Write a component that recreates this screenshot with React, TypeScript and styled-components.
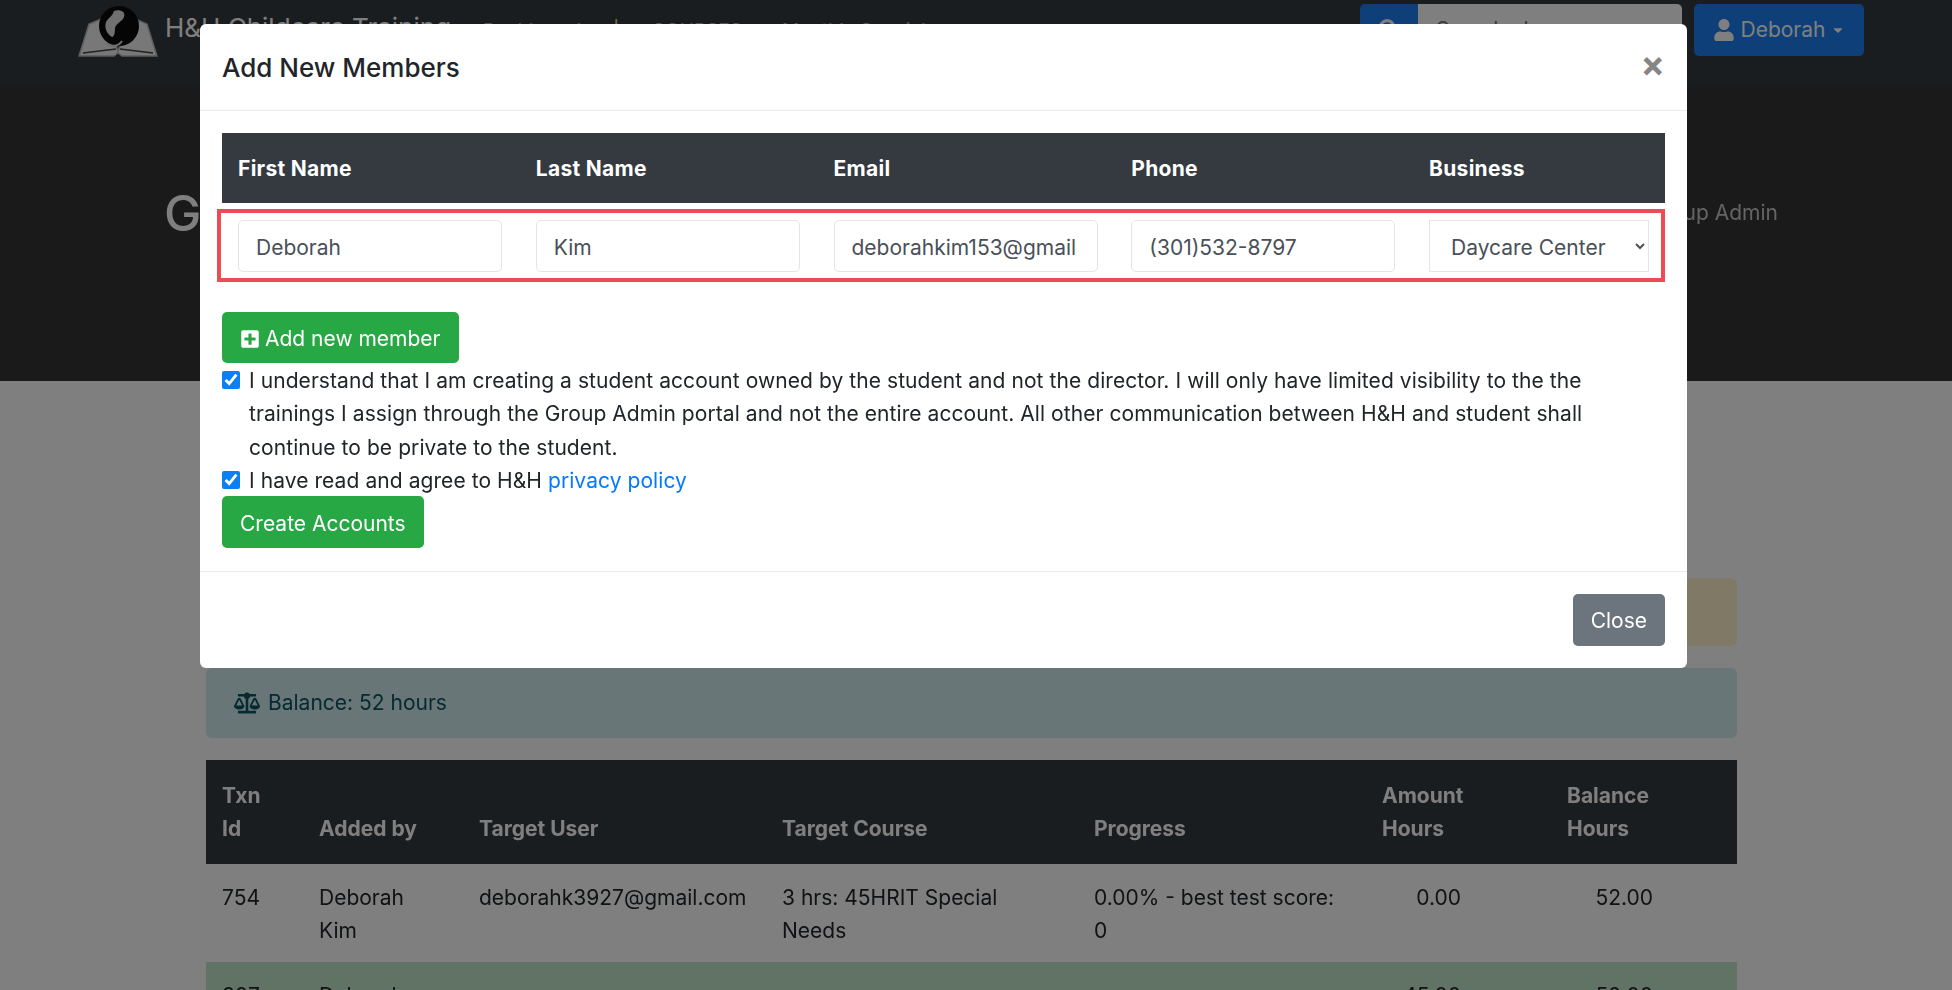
import styled, { createGlobalStyle } from "styled-components";
import {
  FaBalanceScale,
  FaCaretDown,
  FaPlusSquare,
  FaSearch,
  FaUser,
} from "react-icons/fa";

const GlobalStyle = createGlobalStyle`
  * {
    box-sizing: border-box;
  }
  html, body {
    margin: 0;
    height: 100%;
    overflow: hidden;
  }
  body {
    background: #fff;
    color: #212529;
    font-family: Inter, Roboto, "Liberation Sans", sans-serif;
    font-size: 21px;
    line-height: 33.3px;
  }
`;

const Logo = () => (
  <svg width="80" height="55" viewBox="0 0 80 55">
    <path
      d="M1 53 L11 21 L28 14 L40 48 L53 14 L69 21 L79 53 L44 53 L40 50 L36 53 Z"
      fill="#f0f0f0"
      stroke="#b8b8b8"
      strokeWidth="1.5"
    />
    <path d="M5 50 L38 46 M75 50 L42 46" stroke="#444" strokeWidth="1.5" />
    <circle cx="41" cy="23" r="20" fill="#0a0a0a" />
    <path
      d="M36 8 C42 6 48 9 46 14 C44 19 38 20 37 25 C37 30 36 34 34 34 C29 31 26 25 28 19 C30 15 34 14 36 8 Z"
      fill="#e0e0e0"
    />
    <path d="M44 38 C40 44 32 44 28 40" stroke="#e0e0e0" strokeWidth="2" fill="none" />
  </svg>
);

export default function App() {
  return (
    <Stage>
      <GlobalStyle />
      <Page>
        <Navbar>
          <Brand>
            <Logo />
            <BrandName>H&amp;H Childcare Training</BrandName>
          </Brand>
          <NavLinks>
            <NavLink>Dashboard</NavLink>
            <NavDivider>|</NavDivider>
            <NavLink>COURSES</NavLink>
            <NavLink>Monthly Special</NavLink>
          </NavLinks>
          <SearchGroup>
            <SearchButton>
              <FaSearch size={20} />
            </SearchButton>
            <SearchInput placeholder="Search classes" />
          </SearchGroup>
          <UserButton>
            <FaUser size={22} />
            Deborah
            <FaCaretDown size={14} />
          </UserButton>
        </Navbar>
        <Banner>
          <BannerTitle>Group Admin</BannerTitle>
          <Crumb>Group Admin</Crumb>
        </Banner>
        <Content>
          <Alert $tone="warning" />
          <Alert $tone="info">
            <FaBalanceScale size={26} />
            Balance: 52 hours
          </Alert>
          <Table>
            <colgroup>
              <col width="97" />
              <col width="160" />
              <col width="303" />
              <col width="312" />
              <col width="288" />
              <col width="185" />
              <col width="186" />
            </colgroup>
            <thead>
              <tr>
                <HeadCell>Txn<br />Id</HeadCell>
                <HeadCell>Added by</HeadCell>
                <HeadCell>Target User</HeadCell>
                <HeadCell>Target Course</HeadCell>
                <HeadCell>Progress</HeadCell>
                <HeadCell>Amount<br />Hours</HeadCell>
                <HeadCell>Balance<br />Hours</HeadCell>
              </tr>
            </thead>
            <tbody>
              <tr>
                <Cell>754</Cell>
                <Cell>Deborah<br />Kim</Cell>
                <Cell>deborahk3927@gmail.com</Cell>
                <Cell>3 hrs: 45HRIT Special<br />Needs</Cell>
                <Cell>0.00% - best test score:<br />0</Cell>
                <Cell $numberPad={90}>0.00</Cell>
                <Cell $numberPad={84}>52.00</Cell>
              </tr>
              <GreenRow>
                <Cell>387</Cell>
                <Cell>Deborah<br />Kim</Cell>
                <Cell />
                <Cell />
                <Cell />
                <Cell $numberPad={90}>45.00</Cell>
                <Cell $numberPad={84}>52.00</Cell>
              </GreenRow>
            </tbody>
          </Table>
        </Content>
      </Page>

      <Backdrop />

      <Modal>
        <ModalHeader>
          <ModalTitle>Add New Members</ModalTitle>
          <CloseX>×</CloseX>
        </ModalHeader>
        <ModalBody>
          <MemberHead>
            <span>First Name</span>
            <span>Last Name</span>
            <span>Email</span>
            <span>Phone</span>
            <span>Business</span>
          </MemberHead>
          <MemberRow>
            <TextInput readOnly value="Deborah" />
            <TextInput readOnly value="Kim" />
            <TextInput readOnly value="deborahkim153@gmail.com" />
            <TextInput readOnly value="(301)532-8797" />
            <BusinessSelect defaultValue="Daycare Center">
              <option>Daycare Center</option>
            </BusinessSelect>
          </MemberRow>
          <AddButton>
            <FaPlusSquare size={20} />
            Add new member
          </AddButton>
          <CheckRow>
            <Check type="checkbox" readOnly checked />
            <CheckText>
              I understand that I am creating a student account owned by the
              student and not the director. I will only have limited visibility
              to the the trainings I assign through the Group Admin portal and
              not the entire account. All other communication between H&amp;H
              and student shall continue to be private to the student.
            </CheckText>
          </CheckRow>
          <CheckRow>
            <Check type="checkbox" readOnly checked />
            <CheckText>
              I have read and agree to H&amp;H <Link>privacy policy</Link>
            </CheckText>
          </CheckRow>
          <Button $color="#28a745">Create Accounts</Button>
        </ModalBody>
        <ModalFooter>
          <Button $color="#6c757d">Close</Button>
        </ModalFooter>
      </Modal>
    </Stage>
  );
}

/* the reference is a soft, upscaled capture */
const Stage = styled.div`
  height: 990px;
  filter: blur(0.5px);
`;

const Page = styled.div`
  height: 990px;
  overflow: hidden;
`;

const Navbar = styled.nav`
  height: 85px;
  display: flex;
  align-items: flex-start;
  padding: 3px 88px 0 78px;
  background: #343a40;
`;

const Brand = styled.div`
  display: flex;
  align-items: flex-start;
  gap: 7px;
`;

const BrandName = styled.span`
  font-size: 26px;
  line-height: 50px;
  color: #fff;
`;

const NavLinks = styled.div`
  display: flex;
  align-items: center;
  gap: 40px;
  margin-left: 32px;
  padding-top: 11px;
  font-size: 19px;
  color: rgba(255, 255, 255, 0.6);
`;

const NavLink = styled.span``;

const NavDivider = styled.span`
  color: #ffe08a;
  margin: 0 -8px;
`;

const SearchGroup = styled.div`
  display: flex;
  margin-left: auto;
  margin-top: 1px;
  height: 52px;
`;

const SearchButton = styled.button`
  width: 58px;
  border: 0;
  border-radius: 5px 0 0 5px;
  background: #1c7ef0;
  color: #fff;
`;

const SearchInput = styled.input`
  width: 264px;
  border: 0;
  border-radius: 0 5px 5px 0;
  padding: 0 18px;
  background: #fff;
  font: inherit;
`;

const UserButton = styled.button`
  display: flex;
  align-items: center;
  justify-content: center;
  gap: 6px;
  width: 170px;
  height: 52px;
  margin: 1px 0 0 12px;
  border: 0;
  border-radius: 5px;
  background: #1c7ef0;
  color: #fff;
  font: inherit;
`;

const Banner = styled.header`
  height: 296px;
  display: flex;
  align-items: center;
  justify-content: space-between;
  padding: 0 174px 40px 164px;
  background: #343434;
  color: #fff;
`;

const BannerTitle = styled.h1`
  margin: 0;
  font-size: 50px;
  font-weight: 500;
  line-height: 60px;
`;

const Crumb = styled.span`
  color: #c8c8c8;
`;

const Content = styled.main`
  display: flex;
  flex-direction: column;
  gap: 22px;
  padding: 197px 215px 0 206px;
`;

const Alert = styled.div<{ $tone: "warning" | "info" }>`
  height: ${({ $tone }) => ($tone === "warning" ? "68px" : "70px")};
  display: flex;
  align-items: center;
  gap: 8px;
  padding: 0 28px;
  border-radius: 6px;
  background: ${({ $tone }) => ($tone === "warning" ? "#fff3cd" : "#d1ecf1")};
  color: #0c5460;
`;

const Table = styled.table`
  width: 1531px;
  table-layout: fixed;
  border-collapse: collapse;
`;

const HeadCell = styled.th`
  padding: 19px 16px 18px;
  vertical-align: bottom;
  text-align: left;
  font-weight: 700;
  background: #343a40;
  color: #fff;
`;

const Cell = styled.td<{ $numberPad?: number }>`
  padding: 17px 16px 15px;
  vertical-align: top;
  text-align: ${({ $numberPad }) => ($numberPad ? "right" : "left")};
  padding-right: ${({ $numberPad }) => $numberPad ?? 16}px;
`;

const GreenRow = styled.tr`
  background: #c3e6cb;
`;

const Backdrop = styled.div`
  position: fixed;
  inset: 0;
  background: rgba(0, 0, 0, 0.5);
`;

const Modal = styled.div`
  position: fixed;
  top: 24px;
  left: 200px;
  width: 1487px;
  height: 644px;
  border-radius: 6px;
  background: #fff;
  display: flex;
  flex-direction: column;
`;

const ModalHeader = styled.div`
  height: 87px;
  flex-shrink: 0;
  display: flex;
  align-items: center;
  justify-content: space-between;
  padding: 0 22px;
  border-bottom: 1px solid #e9ecef;
`;

const ModalTitle = styled.h5`
  margin: 0;
  padding-top: 1px;
  font-size: 26px;
  font-weight: 500;
`;

const CloseX = styled.span`
  padding-bottom: 5px;
  font-size: 36px;
  font-weight: 700;
  color: #858585;
`;

const ModalBody = styled.div`
  flex: 1;
  display: flex;
  flex-direction: column;
  align-items: flex-start;
  padding: 22px 22px 0;
`;

const MemberHead = styled.div`
  width: 100%;
  height: 70px;
  flex-shrink: 0;
  display: grid;
  grid-template-columns: repeat(4, 297.75px) 1fr;
  align-items: center;
  padding: 2px 0 0 16px;
  background: #343a40;
  color: #fff;
  font-weight: 700;
  letter-spacing: 0.3px;
`;

const MemberRow = styled.div`
  width: calc(100% + 5px);
  height: 73px;
  flex-shrink: 0;
  margin: 6px 0 30px -5px;
  padding: 7px 13px 0 17px;
  display: grid;
  grid-template-columns: repeat(4, 264px) 220px;
  column-gap: 33.75px;
  border: 4px solid #ee4b55;
`;

const TextInput = styled.input`
  width: 100%;
  height: 52px;
  padding: 2px 21px 0 17px;
  border: 1px solid #e3e5ea;
  border-radius: 5px;
  color: #495057;
  font: inherit;
  outline: none;
`;

const BusinessSelect = styled.select`
  width: 100%;
  height: 52px;
  padding: 2px 17px 0;
  border: 1px solid #e3e5ea;
  background: #fff;
  color: #495057;
  font: inherit;
  outline: none;
`;

const Button = styled.button<{ $color: string }>`
  display: inline-flex;
  align-items: center;
  height: 52px;
  padding: 2px 18px 0;
  border: 0;
  border-radius: 5px;
  background: ${({ $color }) => $color};
  color: #fff;
  font: inherit;
  white-space: nowrap;
`;

const AddButton = styled(Button).attrs({ $color: "#28a745" })`
  gap: 5px;
  height: 51px;
  flex-shrink: 0;
`;

const CheckRow = styled.label`
  display: flex;
  align-items: flex-start;
  gap: 9px;
  margin-bottom: -1px;
`;

const CheckText = styled.span`
  max-width: 1350px;
  padding-top: 1px;
  letter-spacing: 0.07px;
`;

const Check = styled.input`
  width: 18px;
  height: 18px;
  flex-shrink: 0;
  margin: 8px 0 0;
  accent-color: #0d7ff5;
`;

const Link = styled.a`
  color: #007bff;
`;

const ModalFooter = styled.div`
  flex-shrink: 0;
  display: flex;
  justify-content: flex-end;
  padding: 22px;
  border-top: 1px solid #e9ecef;
`;
